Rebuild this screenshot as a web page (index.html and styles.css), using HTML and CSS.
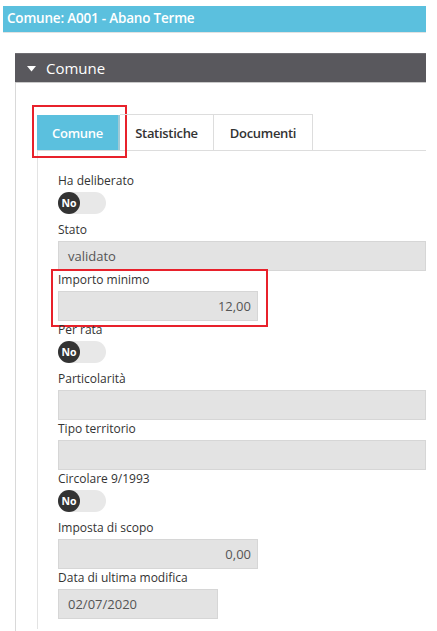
FILE: index.html
```html
<!DOCTYPE html>
<html lang="it">
<head>
<meta charset="utf-8">
<title>Comune: A001 - Abano Terme</title>
<link rel="stylesheet" href="styles.css">
</head>
<body>
<div class="page">
  <div class="topbar">Comune: A001 - Abano Terme</div>
  <div class="panel">
    <div class="panel-head">
      <svg class="caret" width="9" height="6" viewBox="0 0 9 6"><polygon points="0,0 9,0 4.5,5.5" fill="#fff"/></svg>
      <span>Comune</span>
    </div>
    <div class="panel-body">
      <ul class="tabs">
        <li class="tab active mark">Comune</li>
        <li class="tab tab-stat">Statistiche</li>
        <li class="tab tab-doc">Documenti</li>
      </ul>
      <div class="tab-content">
        <div class="field">
          <label class="lbl">Ha deliberato</label>
          <div class="toggle"><span class="knob">No</span></div>
        </div>
        <div class="field">
          <label class="lbl">Stato</label>
          <div class="input">validato</div>
        </div>
        <div class="field mark-field">
          <label class="lbl">Importo minimo</label>
          <div class="input num short">12,00</div>
        </div>
        <div class="field">
          <label class="lbl">Per rata</label>
          <div class="toggle"><span class="knob">No</span></div>
        </div>
        <div class="field">
          <label class="lbl">Particolarità</label>
          <div class="input"></div>
        </div>
        <div class="field">
          <label class="lbl">Tipo territorio</label>
          <div class="input"></div>
        </div>
        <div class="field">
          <label class="lbl">Circolare 9/1993</label>
          <div class="toggle"><span class="knob">No</span></div>
        </div>
        <div class="field">
          <label class="lbl">Imposta di scopo</label>
          <div class="input num short">0,00</div>
        </div>
        <div class="field">
          <label class="lbl">Data di ultima modifica</label>
          <div class="input date">02/07/2020</div>
        </div>
      </div>
    </div>
  </div>
</div>
</body>
</html>
```

FILE: styles.css
```css
html, body {
  margin: 0;
  padding: 0;
  background: #fff;
}
body {
  font-family: "Open Sans", "Noto Sans", "DejaVu Sans", sans-serif;
  color: #333;
  font-size: 12px;
}
.page {
  width: 423px;
  margin-left: 3px;
  padding-top: 6px;
}
.topbar {
  height: 26px;
  line-height: 25px;
  background: #5bc0de;
  color: #fff;
  font-size: 13.5px;
  font-weight: 600;
  padding-left: 4px;
  border-bottom: 1px solid #e2e2e2;
  letter-spacing: -0.2px;
}
.panel {
  margin-top: 20px;
  margin-left: 12px;
}
.panel-head {
  height: 28px;
  background: #59585d;
  border-top: 1px solid #6e6d72;
  border-bottom: 1px solid #c9c9c9;
  color: #fff;
  display: flex;
  align-items: center;
  font-size: 15px;
  padding-left: 12px;
}
.caret {
  margin-right: 10px;
  margin-top: 1px;
}
.panel-body {
  border-left: 1px solid #d9d9d9;
  padding-left: 21px;
  padding-top: 31px;
  padding-bottom: 20px;
}
.tabs {
  list-style: none;
  margin: 0;
  padding: 0;
  display: flex;
  border-bottom: 1px solid #ddd;
  height: 36px;
}
.tab {
  position: relative;
  box-sizing: border-box;
  height: 36px;
  border: 1px solid #ddd;
  border-bottom: none;
  border-left: none;
  font-size: 13px;
  font-weight: 600;
  color: #333;
  display: flex;
  align-items: center;
  justify-content: center;
  letter-spacing: -0.3px;
}
.tab.active {
  background: #5bc0de;
  color: #fff;
  width: 83px;
  border: none;
  border-right: 2px solid #9fc9d6;
  margin-top: 1px;
  height: 35px;
}
.tab-stat { width: 94px; }
.tab-doc { width: 99px; }
.mark::after {
  content: "";
  position: absolute;
  left: -5px;
  right: -9px;
  top: -10px;
  bottom: -8px;
  border: 2px solid #e8212b;
}
.tab-content {
  border-left: 1px solid #e3e3e3;
  padding-left: 20px;
  padding-top: 21px;
  padding-bottom: 10px;
}
.field {
  position: relative;
}
.mark-field::after {
  content: "";
  position: absolute;
  left: -7px;
  top: -2px;
  width: 213px;
  bottom: -6px;
  border: 2px solid #e8212b;
}
.lbl {
  display: block;
  line-height: 17px;
  margin-bottom: 3px;
  font-size: 12px;
  color: #333;
}
.input {
  box-sizing: border-box;
  height: 30px;
  background: #e3e3e3;
  border: 1px solid #d6d6d6;
  color: #555;
  font-size: 13px;
  line-height: 28px;
  padding: 0 9px;
}
.input.short {
  width: 200px;
}
.input.num {
  text-align: right;
  padding-right: 6px;
}
.input.date {
  width: 160px;
}
.toggle {
  width: 48px;
  height: 22px;
  border-radius: 11px;
  background: #e8e8e8;
  margin-bottom: 7px;
  display: flex;
  align-items: center;
}
.knob {
  width: 22px;
  height: 22px;
  border-radius: 50%;
  background: #333;
  color: #fff;
  font-size: 10.5px;
  font-weight: 700;
  display: flex;
  align-items: center;
  justify-content: center;
}
```
